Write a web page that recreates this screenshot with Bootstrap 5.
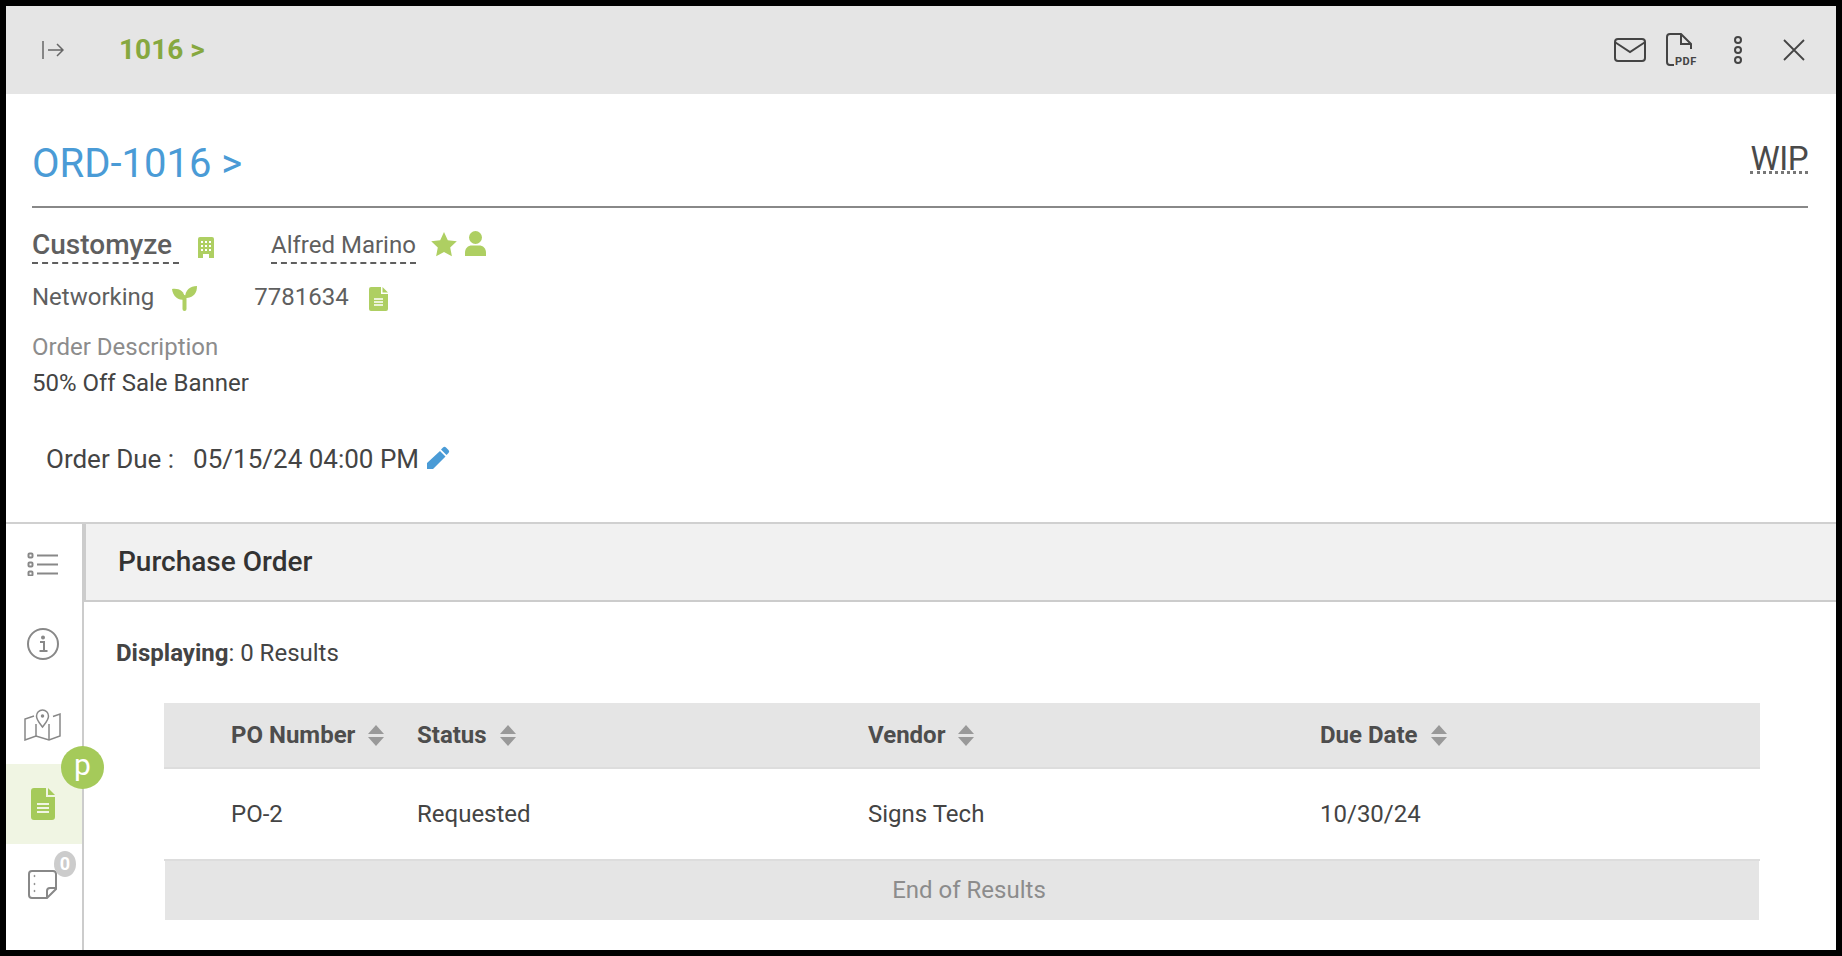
<!DOCTYPE html>
<html lang="en">
<head>
<meta charset="utf-8">
<title>ORD-1016</title>
<link href="https://cdn.jsdelivr.net/npm/bootstrap@5.3.0/dist/css/bootstrap.min.css" rel="stylesheet">
<style>
html,body{height:100%}
body{background:#000;padding:6px;font-family:Roboto,"Liberation Sans",sans-serif;color:#4a4a4a;overflow:hidden}
.app{background:#fff;height:944px;width:1830px;overflow:hidden}
.topbar{height:88px;background:#e5e5e5;padding:0 31px 0 36px}
.crumb{font-size:28px;font-weight:700;color:#86a83f;margin-left:55px;line-height:1}
.topicons svg{display:block}
.info{height:430px;padding:0 28px 0 26px;border-bottom:2px solid #d0d0d0}
.ordhead{height:114px;border-bottom:2px solid #888;padding-top:46px}
.ordno{font-size:40px;line-height:48px;color:#4a9bd6}
.wip{font-size:33px;line-height:45px;color:#4a4a4a;border-bottom:3px dotted #777;height:38px;margin-top:-4px;letter-spacing:-.5px}
.meta1{height:54px;padding-top:21px;font-size:24px;color:#5f5f5f}
.cust{font-size:28px;font-weight:500;line-height:32px;border-bottom:2px dashed #5f5f5f;width:147px;height:35px}
.alf{font-size:24px;line-height:33px;border-bottom:2px dashed #5f5f5f;height:35px}
.meta2{font-size:24px;line-height:28px;color:#5f5f5f;margin-top:21px}
.olabel{font-size:24px;line-height:28px;color:#8c8c8c;margin-top:22px}
.otext{font-size:24px;line-height:28px;color:#444;margin-top:8px}
.odue{font-size:26px;line-height:32px;color:#444;margin:46px 0 0 14px}
.lower{height:426px}
.sidenav{width:78px;border-right:2px solid #ccc;flex:none}
.sideitem{height:80px;width:76px;position:relative;padding-right:3px}
.sideitem.on{background:#f0f5e3}
.pbadge{position:absolute;left:55px;top:-18px;width:43px;height:43px;border-radius:50%;background:#a5ca5a;color:#fff;font-size:30px;line-height:38px;text-align:center;z-index:2}
.zbadge{position:absolute;left:48px;top:7px;width:22px;height:26px;border-radius:50%;background:#ccc;color:#fff;font-size:18px;font-weight:700;line-height:25px;text-align:center}
.panelhead{height:78px;background:#f1f1f1;border-left:2px solid #ccc;border-bottom:2px solid #ccc;padding-left:32px;font-size:28px;font-weight:500;color:#333}
.displ{font-size:24px;line-height:28px;color:#444;margin:37px 0 0 32px}
.displ b{font-weight:700}
.polist{width:1596px;margin:36px 0 0 80px;table-layout:fixed;border-collapse:collapse}
.polist th{background:#e5e5e5;height:65px;font-size:24px;font-weight:700;color:#4d4d4d;border-bottom:2px solid #ddd;padding:0;vertical-align:middle}
.polist td{height:92px;font-size:24px;color:#444;padding:0;border-bottom:2px solid #ddd;vertical-align:middle}
.polist .c1{width:253px;padding-left:67px}
.polist .c2{width:451px}
.polist .c3{width:452px}
.sortic{display:inline-block;vertical-align:-3px;margin-left:13px}
.endrow{width:1594px;height:59px;margin-left:81px;padding-left:14px;background:#e5e5e5;color:#8c8c8c;font-size:24px;text-align:center;line-height:58px}
</style>
</head>
<body>
<div class="app d-flex flex-column">
  <div class="topbar d-flex align-items-center justify-content-between">
    <div class="d-flex align-items-center">
      <svg width="22" height="18" viewBox="0 0 22 18" fill="none" stroke="#666" stroke-width="1.5"><path d="M1 0v18"/><path d="M6 9h15M15 3l6 6-6 6"/></svg>
      <span class="crumb">1016 &gt;</span>
    </div>
    <div class="topicons d-flex align-items-center">
      <svg width="32" height="24" viewBox="0 0 32 24" fill="none" stroke="#444" stroke-width="2"><rect x="1" y="1" width="30" height="22" rx="3"/><path d="M1.500 4.500 16 14 30.500 4.500"/></svg>
      <svg style="margin-left:20px" width="32" height="34" viewBox="0 0 32 34" fill="none" stroke="#444" stroke-width="2"><path d="M8 32H4q-3 0-3-3V4q0-3 3-3h11l10 10v5"/><path d="M15 1v10h10"/><text x="9" y="32" font-family="Roboto,sans-serif" font-size="11" font-weight="700" fill="#444" stroke="none" letter-spacing=".5">PDF</text></svg>
      <svg style="margin-left:35px" width="10" height="30" viewBox="0 0 10 30" fill="none" stroke="#444" stroke-width="2"><circle cx="5" cy="5" r="3"/><circle cx="5" cy="15" r="3"/><circle cx="5" cy="25" r="3"/></svg>
      <svg style="margin-left:40px" width="22" height="22" viewBox="0 0 22 22" fill="none" stroke="#444" stroke-width="1.800"><path d="M1 1l20 20M21 1 1 21"/></svg>
    </div>
  </div>

  <div class="info">
    <div class="ordhead d-flex justify-content-between align-items-start">
      <span class="ordno">ORD-1016 &gt;</span>
      <span class="wip">WIP</span>
    </div>
    <div class="meta1 d-flex align-items-start">
      <span class="cust">Customyze</span>
      <svg class="mt-2" style="margin-left:19px" width="16" height="21" viewBox="0 0 16 21" fill="#aecf62"><path fill-rule="evenodd" d="M2 0h12a2 2 0 0 1 2 2v19h-5v-4H5v4H0V2a2 2 0 0 1 2-2zM3 4v2h2V4zm4 0v2h2V4zm4 0v2h2V4zM3 8v2h2V8zm4 0v2h2V8zm4 0v2h2V8zM3 12v2h2v-2zm4 0v2h2v-2zm4 0v2h2v-2z"/></svg>
      <span class="alf" style="margin-left:57px">Alfred Marino</span>
      <svg style="margin:3px 0 0 15px" width="26" height="25" viewBox="0 0 26 25" fill="#aecf62"><path d="M13 0l3.800 8.200 9 1.100-6.600 6.100 1.700 8.900L13 20l-7.900 4.300 1.700-8.900L.2 9.300l9-1.100z"/></svg>
      <svg class="ms-2" style="margin-top:2px" width="21" height="25" viewBox="0 0 21 25" fill="#aecf62"><circle cx="10.500" cy="6.500" r="6.500"/><path d="M0 25v-3c0-5 3-7.500 7-7.500h7c4 0 7 2.500 7 7.500v3z"/></svg>
    </div>
    <div class="meta2 d-flex align-items-center">
      <span>Networking</span>
      <svg style="margin-left:18px;margin-top:2px" width="25" height="25" viewBox="0 0 25 25" fill="#aecf62"><path d="M0 3c7-1 12 2 13 9v2C6 14 1 11 0 3z"/><path d="M25 0c0 7-3 11-10 12h-2c0-8 5-12 12-12z"/><rect x="10.500" y="9" width="4" height="16" rx="2"/></svg>
      <span style="margin-left:57px">7781634</span>
      <svg style="margin-left:20px;margin-top:3px" width="19" height="24" viewBox="0 0 19 24"><path fill="#aecf62" d="M2 0h10v7h7v15a2 2 0 0 1-2 2H2a2 2 0 0 1-2-2V2a2 2 0 0 1 2-2z"/><path fill="#aecf62" d="M13.500 0 19 5.500h-5.500z"/><path stroke="#fff" stroke-width="1.500" d="M5 12h9M5 15h9M5 18h9"/></svg>
    </div>
    <div class="olabel">Order Description</div>
    <div class="otext">50% Off Sale Banner</div>
    <div class="odue d-flex align-items-center">
      <span>Order Due :</span>
      <span style="margin-left:19px">05/15/24 04:00 PM</span>
      <svg class="ms-2" style="margin-top:-4px" width="23" height="23" viewBox="0 0 23 23" fill="#4a9bd6"><path d="M16 1.500q1.500-1.500 3 0l2.500 2.500q1.500 1.500 0 3l-2 2-5.500-5.500zM13 5l5.500 5.500L6 23l-6 0 0-6z"/></svg>
    </div>
  </div>

  <div class="lower d-flex">
    <div class="sidenav">
      <div class="sideitem d-flex align-items-center justify-content-center">
        <svg width="32" height="24" viewBox="0 0 32 24" fill="none" stroke="#888" stroke-width="2"><rect x="1.500" y="1.500" width="4" height="4" rx="1"/><rect x="1.500" y="10.500" width="4" height="4" rx="1"/><rect x="1.500" y="19.500" width="4" height="4" rx="1"/><path d="M10 3.500h21M10 12.500h21M10 21.500h21"/></svg>
      </div>
      <div class="sideitem d-flex align-items-center justify-content-center">
        <svg width="32" height="32" viewBox="0 0 32 32" fill="none" stroke="#888" stroke-width="2"><circle cx="16" cy="16" r="15"/><path d="M13 14h4v9M12.500 23h8"/><circle cx="16" cy="9.500" r="1" fill="#888"/></svg>
      </div>
      <div class="sideitem d-flex align-items-center justify-content-center">
        <svg width="37" height="33" viewBox="0 0 37 33" fill="none" stroke="#888" stroke-width="1.500"><path d="M10 8 1 11v21l11-4 13 4 11-4V6l-7 2.500"/><path d="M12 16v12M25 16v16"/><path d="M18.500 19c-3-4-6-7-6-11a6 6 0 0 1 12 0c0 4-3 7-6 11z" /><circle cx="18.500" cy="8" r="1" fill="#888"/></svg>
      </div>
      <div class="sideitem on d-flex align-items-center justify-content-center">
        <span class="pbadge">p</span>
        <svg width="24" height="32" viewBox="0 0 24 32"><path fill="#a5ca5a" d="M3 0h12v9h9v20a3 3 0 0 1-3 3H3a3 3 0 0 1-3-3V3a3 3 0 0 1 3-3z"/><path fill="#a5ca5a" d="M17 0l7 7h-7z"/><path stroke="#f0f5e3" stroke-width="2" d="M6 16h12M6 20h12M6 24h12"/></svg>
      </div>
      <div class="sideitem d-flex align-items-center justify-content-center">
        <span class="zbadge">0</span>
        <svg width="29" height="29" viewBox="0 0 29 29" fill="none" stroke="#888" stroke-width="2"><path d="M19 28H4a3 3 0 0 1-3-3V4a3 3 0 0 1 3-3h21a3 3 0 0 1 3 3v15zM28 18h-6a3 3 0 0 0-3 3v7"/><circle cx="6.500" cy="6" r=".6" fill="#888" stroke-width="1"/><circle cx="6.500" cy="14" r=".6" fill="#888" stroke-width="1"/><circle cx="6.500" cy="21" r=".6" fill="#888" stroke-width="1"/></svg>
      </div>
    </div>
    <div class="flex-grow-1">
      <div class="panelhead d-flex align-items-center">Purchase Order</div>
      <div class="displ"><b>Displaying</b>: 0 Results</div>
      <table class="polist">
        <thead>
          <tr>
            <th class="c1">PO Number<svg class="sortic" width="16" height="21" viewBox="0 0 16 21" fill="#999"><path d="M8 0l8 9H0zM0 12h16l-8 9z"/></svg></th>
            <th class="c2">Status<svg class="sortic" width="16" height="21" viewBox="0 0 16 21" fill="#999"><path d="M8 0l8 9H0zM0 12h16l-8 9z"/></svg></th>
            <th class="c3">Vendor<svg class="sortic" width="16" height="21" viewBox="0 0 16 21" fill="#999"><path d="M8 0l8 9H0zM0 12h16l-8 9z"/></svg></th>
            <th>Due Date<svg class="sortic" width="16" height="21" viewBox="0 0 16 21" fill="#999"><path d="M8 0l8 9H0zM0 12h16l-8 9z"/></svg></th>
          </tr>
        </thead>
        <tbody>
          <tr><td class="c1">PO-2</td><td>Requested</td><td>Signs Tech</td><td>10/30/24</td></tr>
        </tbody>
      </table>
      <div class="endrow">End of Results</div>
    </div>
  </div>
</div>
<script src="https://cdn.jsdelivr.net/npm/bootstrap@5.3.0/dist/js/bootstrap.bundle.min.js"></script>
</body>
</html>
